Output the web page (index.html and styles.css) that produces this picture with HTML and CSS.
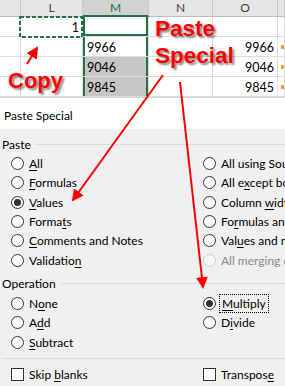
FILE: index.html
```html
<!DOCTYPE html>
<html lang="en">
<head>
    <meta charset="UTF-8">
    <title>Paste Special - Multiply</title>
    <link rel="stylesheet" href="styles.css">
</head>
<body>
<div class="page">
    <!-- worksheet strip -->
    <div class="sheet">
        <div class="hd"></div>
        <div class="hd">L</div>
        <div class="hd sel">M</div>
        <div class="hd">N</div>
        <div class="hd">O</div>
        <div class="hd"></div>

        <div class="cell"></div>
        <div class="cell num copied">1
            <svg class="ants" viewBox="0 0 64 22" preserveAspectRatio="none"><rect x="1" y="1" width="62" height="20"/></svg>
        </div>
        <div class="cell m-top"></div>
        <div class="cell"></div>
        <div class="cell"></div>
        <div class="cell"></div>

        <div class="cell"></div>
        <div class="cell"></div>
        <div class="cell m-col">9966</div>
        <div class="cell"></div>
        <div class="cell num">9966</div>
        <div class="cell flag"></div>

        <div class="cell"></div>
        <div class="cell"></div>
        <div class="cell m-col grey">9046</div>
        <div class="cell"></div>
        <div class="cell num">9046</div>
        <div class="cell flag"></div>

        <div class="cell"></div>
        <div class="cell"></div>
        <div class="cell m-col grey">9845</div>
        <div class="cell"></div>
        <div class="cell num">9845</div>
        <div class="cell flag"></div>
    </div>

    <!-- dialog -->
    <div class="dialog">
        <div class="title">Paste Special</div>
        <div class="body">
            <div class="legend">Paste</div>
            <div class="options">
                <div class="opt"><span class="radio"></span><span><u>A</u>ll</span></div>
                <div class="opt"><span class="radio"></span><span>All using Source theme</span></div>
                <div class="opt"><span class="radio"></span><span><u>F</u>ormulas</span></div>
                <div class="opt"><span class="radio"></span><span>All e<u>x</u>cept borders</span></div>
                <div class="opt"><span class="radio on"></span><span><u>V</u>alues</span></div>
                <div class="opt"><span class="radio"></span><span>Column <u>w</u>idths</span></div>
                <div class="opt"><span class="radio"></span><span>Forma<u>t</u>s</span></div>
                <div class="opt"><span class="radio"></span><span>Fo<u>r</u>mulas and number formats</span></div>
                <div class="opt"><span class="radio"></span><span><u>C</u>omments and Notes</span></div>
                <div class="opt"><span class="radio"></span><span>Val<u>u</u>es and number formats</span></div>
                <div class="opt"><span class="radio"></span><span>Validatio<u>n</u></span></div>
                <div class="opt off"><span class="radio"></span><span>All merging conditional formats</span></div>
            </div>

            <div class="legend op">Operation</div>
            <div class="options">
                <div class="opt"><span class="radio"></span><span>N<u>o</u>ne</span></div>
                <div class="opt"><span class="radio on"></span><span class="focus"><u>M</u>ultiply</span></div>
                <div class="opt"><span class="radio"></span><span>A<u>d</u>d</span></div>
                <div class="opt"><span class="radio"></span><span>D<u>i</u>vide</span></div>
                <div class="opt"><span class="radio"></span><span><u>S</u>ubtract</span></div>
            </div>

            <div class="sep"></div>
            <div class="options checks">
                <div class="opt"><span class="box"></span><span>Skip <u>b</u>lanks</span></div>
                <div class="opt"><span class="box"></span><span>Transpos<u>e</u></span></div>
            </div>
        </div>
    </div>

    <!-- red annotations -->
    <div class="note copy">Copy</div>
    <div class="note paste">Paste<br>Special</div>
    <svg class="arrows" width="285" height="386" viewBox="0 0 285 386">
        <defs>
            <marker id="head" markerWidth="6" markerHeight="6" refX="5" refY="3" orient="auto" markerUnits="strokeWidth">
                <path d="M0,0 L6,3 L0,6 Z" fill="#f00"/>
            </marker>
        </defs>
        <line x1="27" y1="64" x2="37" y2="48" marker-end="url(#head)"/>
        <line x1="163" y1="75" x2="73" y2="200" marker-end="url(#head)"/>
        <line x1="180" y1="82" x2="203" y2="287" marker-end="url(#head)"/>
    </svg>
</div>
</body>
</html>
```

FILE: styles.css
```css
* {
    box-sizing: border-box;
}
body {
    margin: 0;
    background: #fff;
}
.page {
    position: relative;
    width: 285px;
    height: 386px;
    overflow: hidden;
    font-family: Lato, sans-serif;
}

/* worksheet */
.sheet {
    display: grid;
    grid-template-columns: 21px 62px 66px 64px 65px 1fr;
    grid-template-rows: 17px repeat(4, 20px);
    border-bottom: 1px solid #d4d4d4;
    font-size: 12.5px;
    color: #000;
}
.hd {
    background: #e6e6e6;
    border-right: 1px solid #c8c8c8;
    border-bottom: 1px solid #bdbdbd;
    text-align: center;
    line-height: 16px;
    color: #444;
    font-size: 12px;
}
.hd.sel {
    background: #d2d2d2;
    color: #217346;
    border-bottom: 2px solid #217346;
}
.cell {
    position: relative;
    border-right: 1px solid #dadcdd;
    border-bottom: 1px solid #dadcdd;
    padding: 2px 3px 0;
    line-height: 18px;
}
.num {
    text-align: right;
}
.copied {
    z-index: 1;
}
.ants {
    position: absolute;
    left: -2px;
    top: -1px;
    width: 64px;
    height: 22px;
}
.ants rect {
    fill: none;
    stroke: #217346;
    stroke-width: 2;
    stroke-dasharray: 4 2;
}
.m-top {
    box-shadow: inset 2px 0 #217346, inset -2px 0 #217346, inset 0 -2px #217346;
}
.m-col {
    box-shadow: inset 2px 0 #217346, inset -2px 0 #217346;
    padding-left: 4px;
}
.grey {
    background: #c6c6c6;
}
.flag::before {
    content: "";
    position: absolute;
    left: 3px;
    top: 8px;
    width: 3px;
    height: 4px;
    background: #f0a030;
}

/* dialog */
.dialog {
    font-size: 12px;
    color: #000;
}
.title {
    height: 31px;
    padding: 3px 0 0 4px;
    display: flex;
    align-items: center;
    background: #fff;
}
.body {
    background: #f0f0f0;
    height: 258px;
    padding-top: 5px;
}
.legend {
    height: 20px;
    display: flex;
    align-items: center;
    gap: 4px;
    padding-left: 2px;
}
.legend::after {
    content: "";
    flex: 1;
    height: 1px;
    background: #dcdcdc;
}
.legend.op {
    margin-top: 4px;
}
.options {
    display: grid;
    grid-template-columns: 192px 1fr;
    grid-auto-rows: 19.3px;
    padding-left: 11px;
}
.opt {
    display: flex;
    align-items: center;
    gap: 5px;
    white-space: nowrap;
}
.opt u {
    text-underline-offset: 2px;
}
.radio {
    flex: none;
    width: 13px;
    height: 13px;
    border: 1px solid #333;
    border-radius: 50%;
    background: #fff;
    display: grid;
    place-items: center;
}
.radio.on::after {
    content: "";
    width: 7px;
    height: 7px;
    border-radius: 50%;
    background: #333;
}
.off {
    color: #8a8a8a;
}
.off .radio {
    border-color: #cfcfcf;
    background: #f7f7f7;
}
.focus {
    outline: 1px dotted #000;
    outline-offset: 1px;
    padding: 0 1px;
}
.sep {
    margin: 6px 0 0 2px;
    height: 1px;
    background: #dcdcdc;
}
.checks {
    margin-top: 6px;
    grid-auto-rows: 20px;
}
.box {
    flex: none;
    width: 13px;
    height: 13px;
    border: 1px solid #333;
    background: #fff;
}

/* annotations */
.note {
    position: absolute;
    color: #f00;
    font-family: "Liberation Sans", Arial, sans-serif;
    font-weight: bold;
    font-size: 22px;
    text-shadow: 2px 2px 2px rgba(0, 0, 0, 0.45);
}
.copy {
    left: 8px;
    top: 70px;
    line-height: 1;
}
.paste {
    left: 155px;
    top: 15px;
    line-height: 27px;
}
.paste {
    font-size: 22.5px;
}
.arrows {
    position: absolute;
    left: 0;
    top: 0;
    pointer-events: none;
}
.arrows line {
    stroke: #f00;
    stroke-width: 2;
}
```
